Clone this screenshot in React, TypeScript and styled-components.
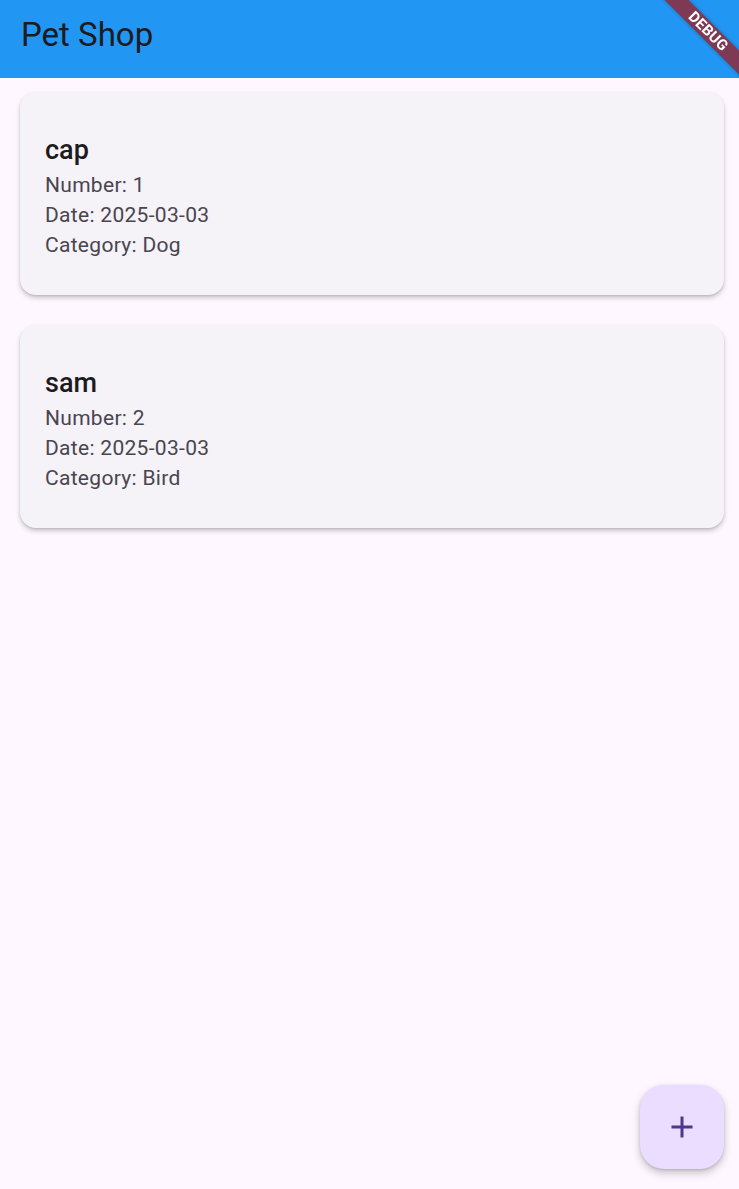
import React from "react";
import styled, { createGlobalStyle } from "styled-components";

const Global = createGlobalStyle`
  html, body { margin: 0; padding: 0; background: #fef7ff; }
  body { font-family: Roboto, "Noto Sans", "Liberation Sans", sans-serif; }
`;

const Page = styled.div`
  min-height: 100vh;
  display: flex;
  flex-direction: column;
  background: #fef7ff;
`;

const AppBar = styled.header`
  height: 78px;
  box-sizing: border-box;
  background: #2196f3;
  padding: 18px 0 0 21px;
`;

const Title = styled.h1`
  margin: 0;
  font-size: 33px;
  line-height: 33px;
  font-weight: 400;
  color: #1d1b20;
`;

const List = styled.main`
  display: flex;
  flex-direction: column;
  gap: 30px;
  padding: 14px 15px 0 20px;
`;

const Card = styled.section`
  background: #f5f2f8;
  border-radius: 16px;
  padding: 40px 24px 35px 25px;
  box-shadow: 0 3px 5px rgba(0, 0, 0, 0.2), 0 1px 2px rgba(0, 0, 0, 0.1);
  display: flex;
  flex-direction: column;
`;

const Name = styled.div`
  font-size: 27px;
  line-height: 36px;
  font-weight: 500;
  color: #1d1b20;
  margin-bottom: 2px;
`;

const Detail = styled.div`
  font-size: 21px;
  line-height: 30px;
  letter-spacing: 0.3px;
  color: #49454f;
`;

const Fab = styled.button`
  position: fixed;
  right: 15px;
  bottom: 20px;
  width: 84px;
  height: 84px;
  border: none;
  border-radius: 24px;
  background: #eaddff;
  display: flex;
  align-items: center;
  justify-content: center;
  box-shadow: 0 4px 8px rgba(0, 0, 0, 0.22), 0 1px 3px rgba(0, 0, 0, 0.15);
  padding: 0;
  cursor: pointer;
`;

const Corner = styled.div`
  position: fixed;
  top: 0;
  right: 0;
  width: 90px;
  height: 90px;
  overflow: hidden;
  pointer-events: none;
`;

const Band = styled.div`
  position: absolute;
  left: 59px;
  top: 31px;
  width: 160px;
  height: 17px;
  margin-left: -80px;
  margin-top: -8.5px;
  transform: rotate(45deg);
  background: #7e3a55;
  color: #fff;
  font-size: 15px;
  font-weight: 700;
  line-height: 17px;
  letter-spacing: 0.2px;
  text-align: center;
  box-shadow: 0 0 4px rgba(0, 0, 0, 0.25);
`;

const pets = [
  { name: "cap", number: 1, date: "2025-03-03", category: "Dog" },
  { name: "sam", number: 2, date: "2025-03-03", category: "Bird" },
];

export default function App() {
  return (
    <Page>
      <Global />
      <AppBar>
        <Title>Pet Shop</Title>
      </AppBar>
      <List>
        {pets.map((p) => (
          <Card key={p.name}>
            <Name>{p.name}</Name>
            <Detail>Number: {p.number}</Detail>
            <Detail>Date: {p.date}</Detail>
            <Detail>Category: {p.category}</Detail>
          </Card>
        ))}
      </List>
      <Fab aria-label="add">
        <svg width="36" height="36" viewBox="0 0 24 24">
          <path d="M19 13h-6v6h-2v-6H5v-2h6V5h2v6h6v2z" fill="#4f378b" />
        </svg>
      </Fab>
      <Corner>
        <Band>DEBUG</Band>
      </Corner>
    </Page>
  );
}
